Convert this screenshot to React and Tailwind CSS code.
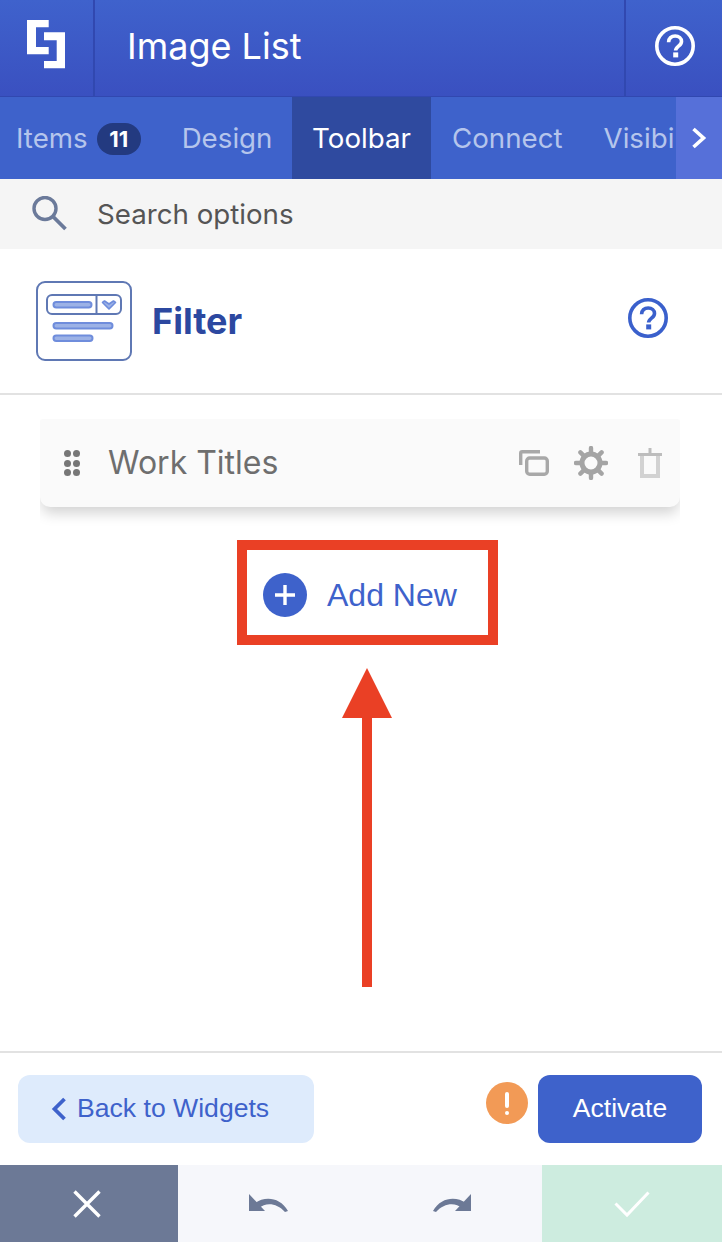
import React from "react";

const inter = "font-['Inter',sans-serif]";
const arial = "font-['Liberation_Sans',Arial,sans-serif]";

function HelpIcon({ className }) {
    return (
        <svg viewBox="0 0 40 40" className={className} fill="none" stroke="currentColor">
            <circle cx="20" cy="20" r="18.200" strokeWidth="3.600" />
            <path d="M13.600 16.200c0-3.800 2.800-6.200 6.600-6.200 3.700 0 6.300 2.200 6.300 5.400 0 4.700-5.900 4.600-5.900 9.200" strokeWidth="3.600" />
            <rect x="18.200" y="26.400" width="5" height="5" fill="currentColor" stroke="none" />
        </svg>
    );
}

function Logo() {
    return (
        <svg viewBox="0 0 38 48.300" className="w-[38px] h-[48.300px] mb-[7px] mr-[1px]" fill="#fff">
            <path d="M0 0h21.700v7.300H9V27h12.700v7.300H0z" />
            <path d="M17 12.300h21v36H17V41h12.700V20.300H17z" />
        </svg>
    );
}

function FilterIcon() {
    return (
        <svg viewBox="0 0 96 80" className="w-[96px] h-[80px]" fill="none">
            <rect x="1" y="1" width="94" height="78" rx="8" stroke="#5f78b4" strokeWidth="2" />
            <rect x="11" y="14" width="74" height="19" rx="5" stroke="#5f78b4" strokeWidth="2" />
            <path d="M60.500 14v19" stroke="#5f78b4" strokeWidth="2" />
            <rect x="17.500" y="21" width="38" height="5.500" rx="2.700" fill="#9cb2e6" stroke="#6f8ddc" strokeWidth="2" />
            <rect x="17.500" y="42" width="59" height="5.500" rx="2.700" fill="#9cb2e6" stroke="#6f8ddc" strokeWidth="2" />
            <rect x="17.500" y="54.500" width="39" height="5.500" rx="2.700" fill="#9cb2e6" stroke="#6f8ddc" strokeWidth="2" />
            <path d="M66.500 21.500l2-1.500 4.500 3 4.500-3 2 1.500-6.500 6.500z" fill="#9cb2e6" stroke="#6f8ddc" strokeWidth="1.600" strokeLinejoin="round" />
        </svg>
    );
}

function Tab({ children, active, className = "" }) {
    return (
        <div className={`flex items-center h-full pt-[2px] text-[27.700px] ${active ? "bg-[#2f4a9f] text-white" : "text-[#b5c5ec]"} ${className}`}>
            {children}
        </div>
    );
}

export default function App() {
    return (
        <div className={`w-[722px] h-[1242px] overflow-hidden bg-white flex flex-col ${inter}`}>
            {/* top bar */}
            <div className="h-[97px] shrink-0 flex bg-gradient-to-b from-[#3f62cc] to-[#3a50c0] border-b border-[#3148b0]">
                <div className="w-[95px] shrink-0 flex items-center justify-center border-r-2 border-[#3148b0]">
                    <Logo />
                </div>
                <div className="flex-1 flex items-center pl-[32px] pb-[4px] text-[36px] text-white">Image List</div>
                <div className="w-[98px] shrink-0 flex items-center justify-center border-l-2 border-[#3148b0] pl-[2px] pb-[4px]">
                    <HelpIcon className="w-[40px] h-[40px] text-white" />
                </div>
            </div>

            {/* tabs */}
            <div className="h-[82px] shrink-0 flex items-center bg-[#3e62cb]">
                <Tab className="w-[292px] pl-[16px]">
                    <span>Items</span>
                    <span className="ml-[9px] w-[44px] h-[32px] rounded-full bg-[#233a80] text-white text-[22px] font-bold flex items-center justify-center">11</span>
                    <span className="ml-[41px]">Design</span>
                </Tab>
                <Tab active className="w-[139px] justify-center">Toolbar</Tab>
                <Tab className="w-[245px] pl-[21px] whitespace-nowrap overflow-hidden">
                    <span>Connect</span>
                    <span className="ml-[41px]">Visibility</span>
                </Tab>
                <div className="w-[46px] h-full bg-[#5670d9] flex items-center justify-center">
                    <svg viewBox="0 0 16 24" className="w-[16px] h-[24px]" fill="none" stroke="#fff" strokeWidth="3.600">
                        <path d="M2.500 3l10 9-10 9" />
                    </svg>
                </div>
            </div>

            {/* search */}
            <div className="h-[70px] shrink-0 flex items-center bg-[#f5f5f5] pl-[32px]">
                <svg viewBox="0 0 36 36" className="w-[36px] h-[36px]" fill="none" stroke="#6b7a9a">
                    <circle cx="13" cy="12.500" r="11" strokeWidth="3.400" />
                    <path d="M21.500 21l12 12" strokeWidth="3.800" />
                </svg>
                <span className="ml-[29px] pt-[2px] text-[27.700px] text-[#555]">Search options</span>
            </div>

            {/* section header */}
            <div className="h-[146px] shrink-0 flex items-center pl-[36px] pr-[54px] border-b-2 border-[#e2e2e2]">
                <FilterIcon />
                <span className="ml-[20px] text-[36px] font-bold text-[#2c48a0]">Filter</span>
                <HelpIcon className="ml-auto mb-[6px] w-[40px] h-[40px] text-[#3a60cc]" />
            </div>

            {/* item row */}
            <div className="flex-1 flex flex-col items-center pt-[24px]">
                <div className="self-start ml-[40px] w-[640px] h-[108px] shrink-0 overflow-hidden">
                    <div className="h-[88px] flex items-center bg-[#fafafa] rounded-[3px] rounded-b-[10px] shadow-[0_8px_14px_-2px_rgba(0,0,0,0.18)] pl-[24px] pr-[18px]">
                        <div className="grid grid-cols-2 gap-x-[2px] gap-y-[2.500px]">
                            {[0, 1, 2, 3, 4, 5].map((i) => (
                                <span key={i} className="w-[7px] h-[7px] rounded-full bg-[#777]" />
                            ))}
                        </div>
                        <span className="ml-[28px] text-[32px] text-[#6e6e6e]">Work Titles</span>
                        <svg viewBox="0 0 30 26" className="ml-auto w-[30px] h-[26px]" fill="none" stroke="#a8a8a8" strokeWidth="3.400">
                            <path d="M1.700 15V3.200a1.500 1.500 0 0 1 1.500-1.500H21" />
                            <rect x="7.700" y="8" width="20.600" height="16.300" rx="3" />
                        </svg>
                        <svg viewBox="0 0 34 34" className="ml-[25px] w-[34px] h-[34px]" fill="none" stroke="#a4a4a4">
                            <circle cx="17" cy="17" r="9" strokeWidth="5" />
                            <path d="M17 2v5M17 27v5M2 17h5M27 17h5M6.400 6.400l3.500 3.500M24.100 24.100l3.500 3.500M27.600 6.400l-3.500 3.500M9.900 24.100l-3.500 3.500" strokeWidth="4.400" strokeLinecap="round" />
                        </svg>
                        <svg viewBox="0 0 24 30" className="ml-[30px] w-[24px] h-[30px]" fill="none" stroke="#d2d2d2">
                            <path d="M4 7v21h16V7" strokeWidth="4" />
                            <path d="M0 6.500h24" stroke="#bdbdbd" strokeWidth="3" />
                            <path d="M12 0v5" stroke="#bdbdbd" strokeWidth="3" strokeLinecap="round" />
                        </svg>
                    </div>
                </div>

                <div className={`mt-[13px] ml-[13px] w-[261px] h-[105px] shrink-0 flex items-center border-[10px] border-[#ea4025] pl-[16px] pt-[5px] ${arial}`}>
                    <span className="w-[44px] h-[44px] shrink-0 rounded-full bg-[#3e62cb] flex items-center justify-center">
                        <svg viewBox="0 0 20 20" className="w-[20px] h-[20px]" stroke="#fff" strokeWidth="3.400">
                            <path d="M10 0v20M0 10h20" />
                        </svg>
                    </span>
                    <span className="ml-[20px] text-[32px] text-[#3e62cb] whitespace-nowrap">Add New</span>
                </div>

                {/* annotation arrow */}
                <svg viewBox="0 0 50 319" className="mt-[23px] ml-[12px] w-[50px] h-[319px] shrink-0" fill="#ea4025">
                    <path d="M25 0l25 50H30v269H20V50H0z" />
                </svg>
            </div>

            {/* footer actions */}
            <div className={`h-[114px] shrink-0 flex items-center pl-[18px] pr-[20px] border-t-2 border-[#e2e2e2] ${arial}`}>
                <div className="w-[296px] h-[68px] rounded-[12px] bg-[#deebfc] flex items-center pl-[33px] text-[26.600px] text-[#3e62cb]">
                    <svg viewBox="0 0 16 24" className="w-[16px] h-[24px] shrink-0" fill="none" stroke="#3e62cb" strokeWidth="3.800">
                        <path d="M13.500 2L3.500 12l10 10" />
                    </svg>
                    <span className="ml-[10px] whitespace-nowrap">Back to Widgets</span>
                </div>
                <span className="ml-auto mb-[12px] w-[42px] h-[42px] rounded-full bg-[#f29a56] flex flex-col items-center justify-center">
                    <span className="w-[4px] h-[16px] rounded-full bg-white" />
                    <span className="mt-[3px] w-[4px] h-[4px] rounded-full bg-white" />
                </span>
                <div className="ml-[10px] w-[164px] h-[68px] rounded-[12px] bg-[#3e62cb] flex items-center justify-center text-[26.500px] text-white">Activate</div>
            </div>

            {/* bottom bar */}
            <div className="h-[77px] shrink-0 flex">
                <div className="w-[178px] bg-[#6c7996] flex items-center justify-center pr-[4px]">
                    <svg viewBox="0 0 28 28" className="w-[28px] h-[28px]" stroke="#fff" strokeWidth="3.400">
                        <path d="M1.500 1.500l25 25M26.500 1.500l-25 25" />
                    </svg>
                </div>
                <div className="flex-1 bg-[#f6f7fb] flex items-center pl-[71px]">
                    <svg viewBox="0 0 40 20" className="w-[40px] h-[20px]" fill="#6c7996">
                        <path d="M0 0l16 17H0z" />
                        <path d="M6 9C16 2 31 3 39 17l-3 1C28 9 17 8 10 14z" />
                    </svg>
                    <svg viewBox="0 0 40 20" className="ml-[143px] w-[40px] h-[20px]" fill="#6c7996">
                        <path d="M39 0L23 17h16z" />
                        <path d="M34 9C24 2 9 3 1 17l3 1C12 9 23 8 30 14z" />
                    </svg>
                </div>
                <div className="w-[180px] bg-[#cdecdf] flex items-center justify-center">
                    <svg viewBox="0 0 36 28" className="w-[36px] h-[28px]" fill="none" stroke="#fff" strokeWidth="3">
                        <path d="M1.500 13.500L13 25 34.500 2.500" />
                    </svg>
                </div>
            </div>
        </div>
    );
}
